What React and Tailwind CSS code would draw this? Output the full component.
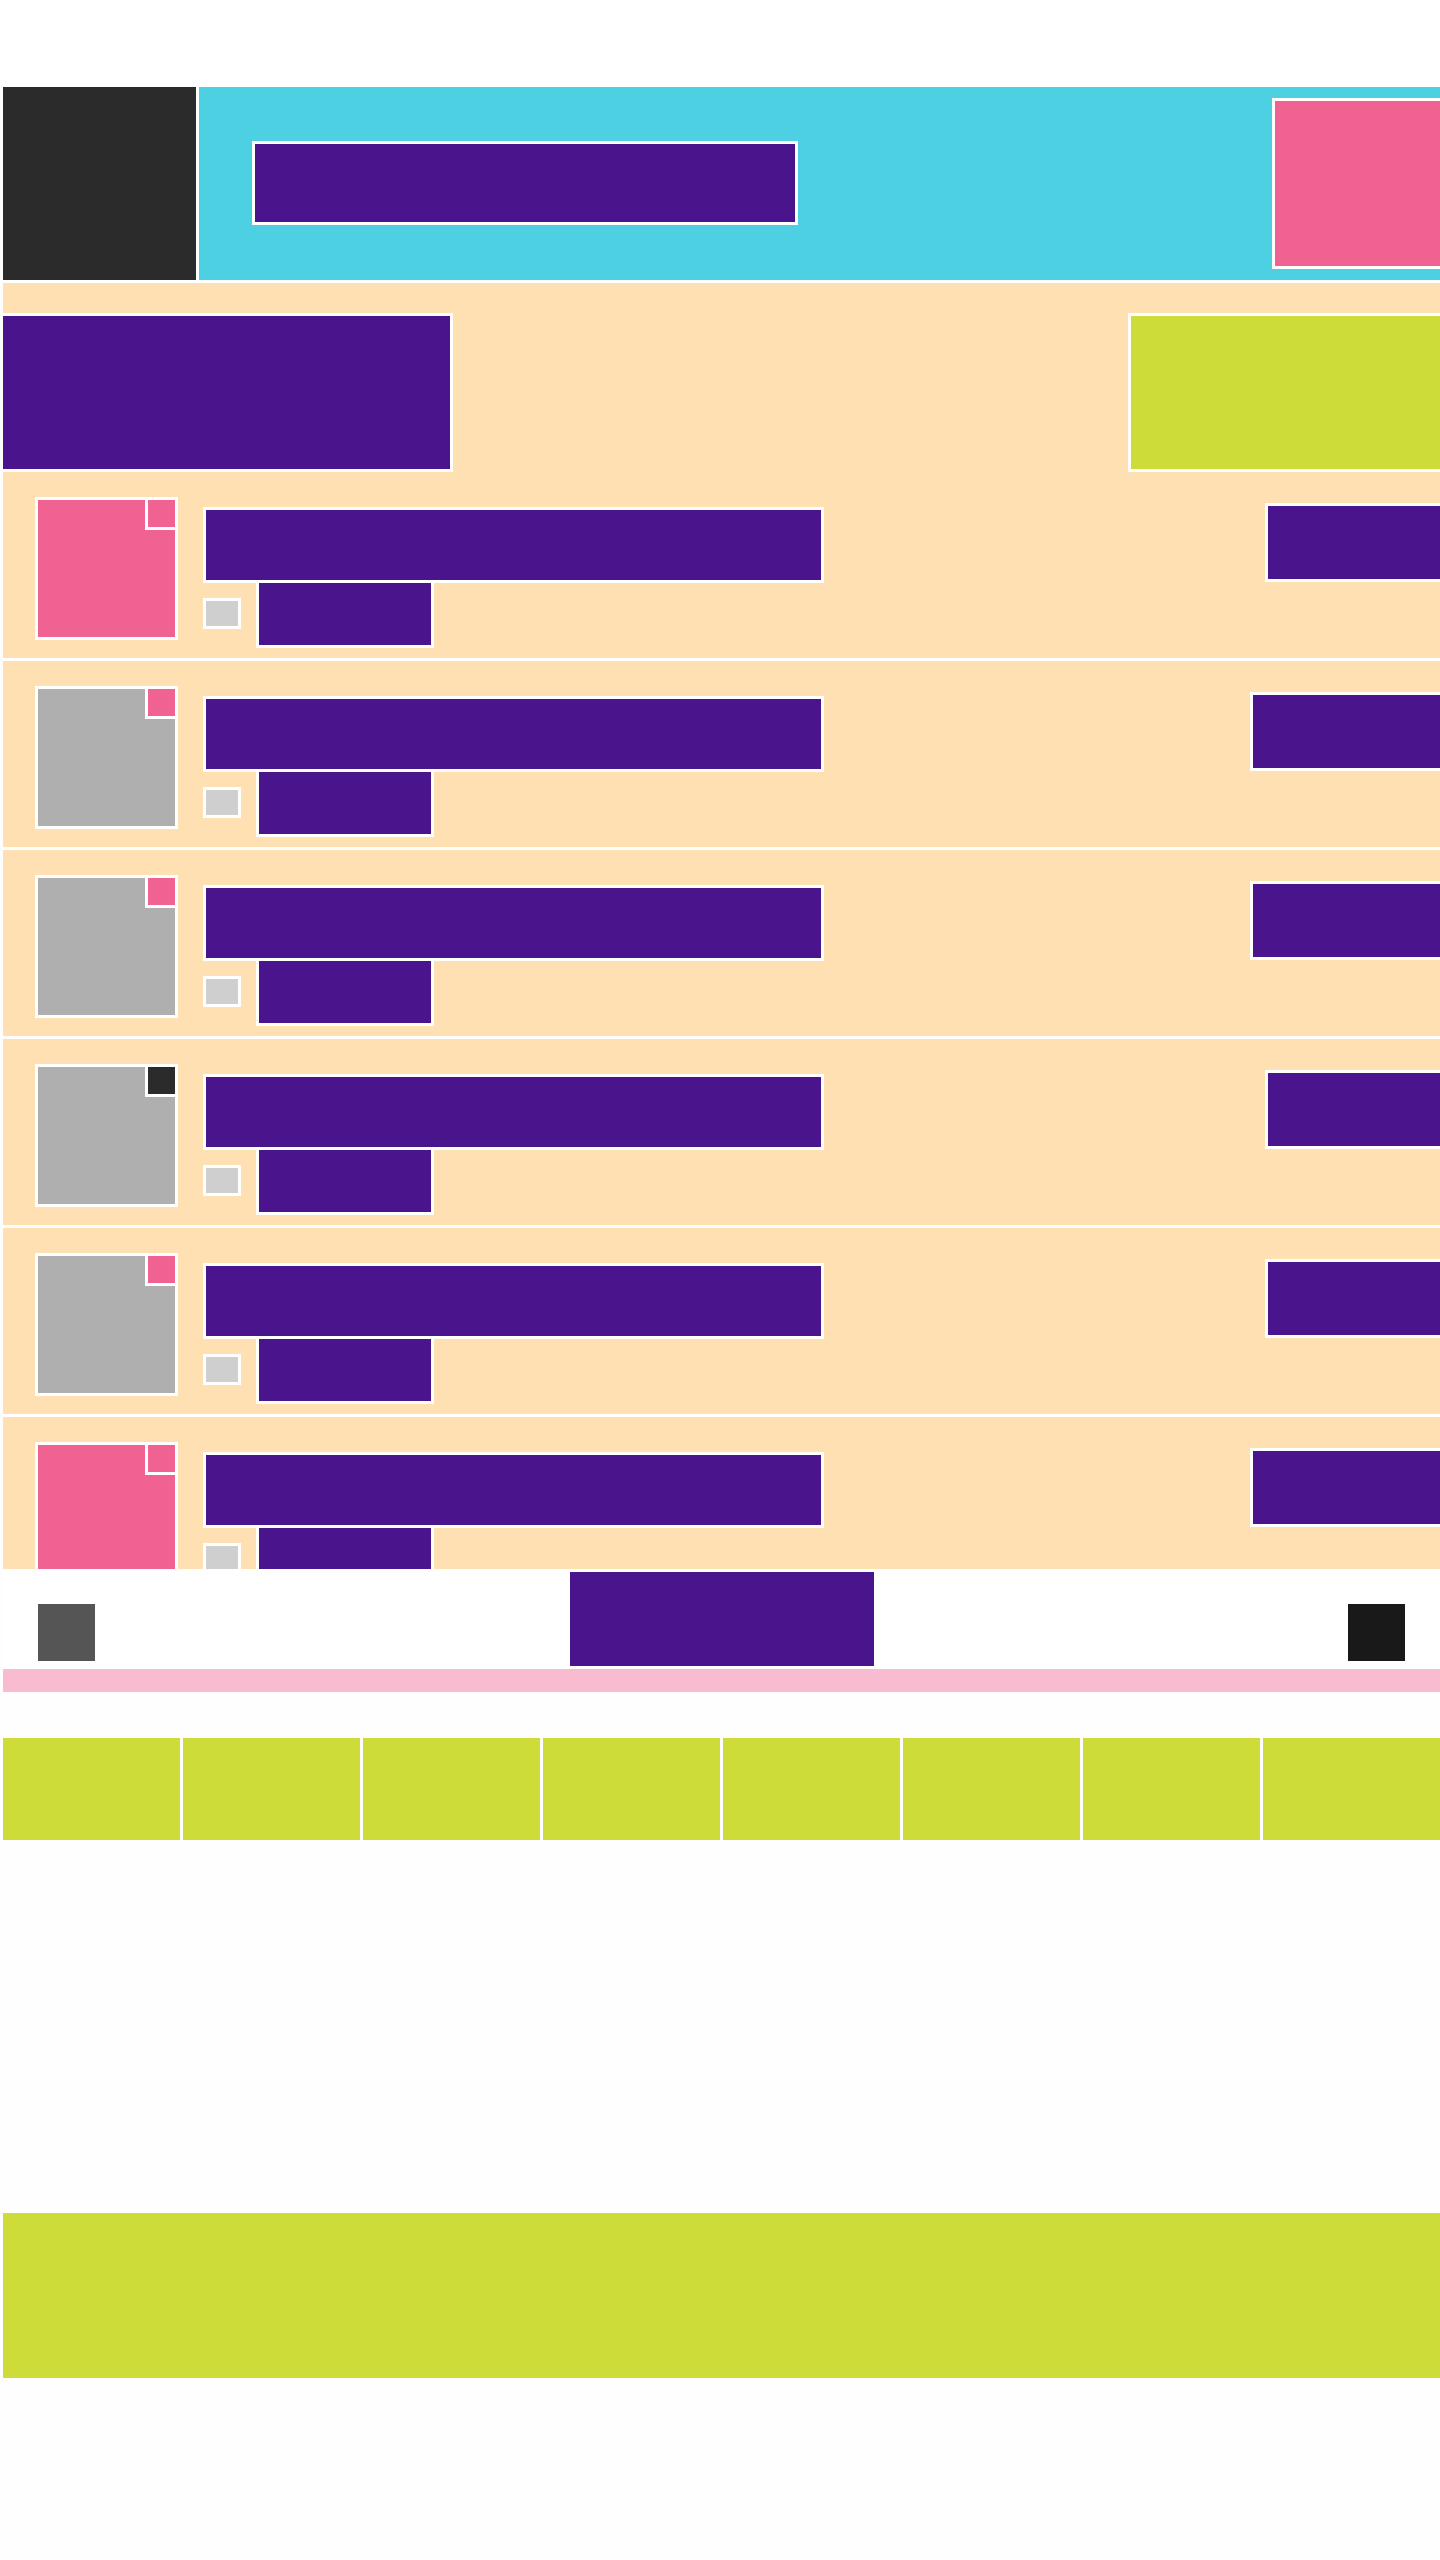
import React from 'react';

const rows = [
  { thumb: 'bg-[#f06292]', badge: 'bg-[#f06292]', shift: 'ml-[441px]' },
  { thumb: 'bg-[#afafaf]', badge: 'bg-[#f06292]', shift: 'ml-[426px]' },
  { thumb: 'bg-[#afafaf]', badge: 'bg-[#f06292]', shift: 'ml-[426px]' },
  { thumb: 'bg-[#afafaf]', badge: 'bg-[#2b2b2b]', shift: 'ml-[441px]' },
  { thumb: 'bg-[#afafaf]', badge: 'bg-[#f06292]', shift: 'ml-[441px]' },
  { thumb: 'bg-[#f06292]', badge: 'bg-[#f06292]', shift: 'ml-[426px]' },
];

const ListRow = ({ thumb, badge, shift }) => (
  <div className="flex items-start h-[189px] border-b-[3px] border-white bg-[#ffe0b2] shrink-0">
    {/* thumbnail with corner badge */}
    <div className={`relative ml-[32px] mt-[25px] w-[143px] h-[143px] shrink-0 border-[3px] border-white ${thumb}`}>
      <div className={`absolute top-0 right-0 w-[30px] h-[30px] border-l-[3px] border-b-[3px] border-white ${badge}`} />
    </div>

    <div className="ml-[25px] mt-[35px] flex flex-col shrink-0">
      <div className="w-[621px] h-[76px] border-[3px] border-white bg-[#4a148c]" />
      <div className="-mt-[3px] flex items-start">
        <div className="mt-[18px] w-[38px] h-[31px] border-[3px] border-white bg-[#cfcfcf]" />
        <div className="ml-[15px] w-[178px] h-[68px] border-[3px] border-white bg-[#4a148c]" />
      </div>
    </div>

    <div className={`${shift} mt-[31px] w-[220px] h-[79px] shrink-0 border-[3px] border-white bg-[#4a148c]`} />
  </div>
);

const App = () => {
  return (
    <div className="w-[1440px] min-h-[2560px] overflow-hidden bg-[#fefefe]">
      <div className="h-[87px] bg-white" />

      <div className="pl-[3px]">
        {/* header */}
        <div className="flex h-[196px] border-b-[3px] border-white">
          <div className="w-[196px] h-full shrink-0 bg-[#2b2b2b] border-r-[3px] border-white" />
          <div className="flex-1 flex items-start bg-[#4dd0e1] overflow-hidden">
            <div className="ml-[53px] mt-[54px] w-[546px] h-[84px] shrink-0 border-[3px] border-white bg-[#4a148c]" />
            <div className="ml-[474px] mt-[11px] w-[220px] h-[171px] shrink-0 border-[3px] border-white bg-[#f06292]" />
          </div>
        </div>

        {/* top section */}
        <div className="flex items-end h-[189px] bg-[#ffe0b2] overflow-hidden">
          <div className="w-[450px] h-[159px] shrink-0 border-y-[3px] border-r-[3px] border-white bg-[#4a148c]" />
          <div className="ml-[675px] w-[330px] h-[159px] shrink-0 border-[3px] border-white bg-[#cddc39]" />
        </div>

        {/* list */}
        <div className="flex flex-col h-[1097px] overflow-hidden">
          {rows.map((r, i) => (
            <ListRow key={i} {...r} />
          ))}
        </div>

        {/* bottom nav */}
        <div className="grid grid-cols-[1fr_auto_1fr] h-[100px] bg-white border-t-[3px] border-white">
          <div className="flex items-start">
            <div className="ml-[35px] mt-[32px] w-[57px] h-[57px] bg-[#555555]" />
          </div>
          <div className="w-[304px] h-[94px] bg-[#4a148c]" />
          <div className="flex items-start justify-end">
            <div className="mr-[35px] mt-[32px] w-[57px] h-[57px] bg-[#191919]" />
          </div>
        </div>

        <div className="h-[23px] bg-[#f8bbd0]" />

        {/* tiles */}
        <div className="mt-[46px] flex gap-[3px]">
          {Array.from({ length: 8 }).map((_, i) => (
            <div key={i} className="w-[177px] h-[102px] shrink-0 bg-[#cddc39]" />
          ))}
        </div>

        <div className="mt-[373px] h-[165px] bg-[#cddc39]" />
      </div>
    </div>
  );
};

export default App;
